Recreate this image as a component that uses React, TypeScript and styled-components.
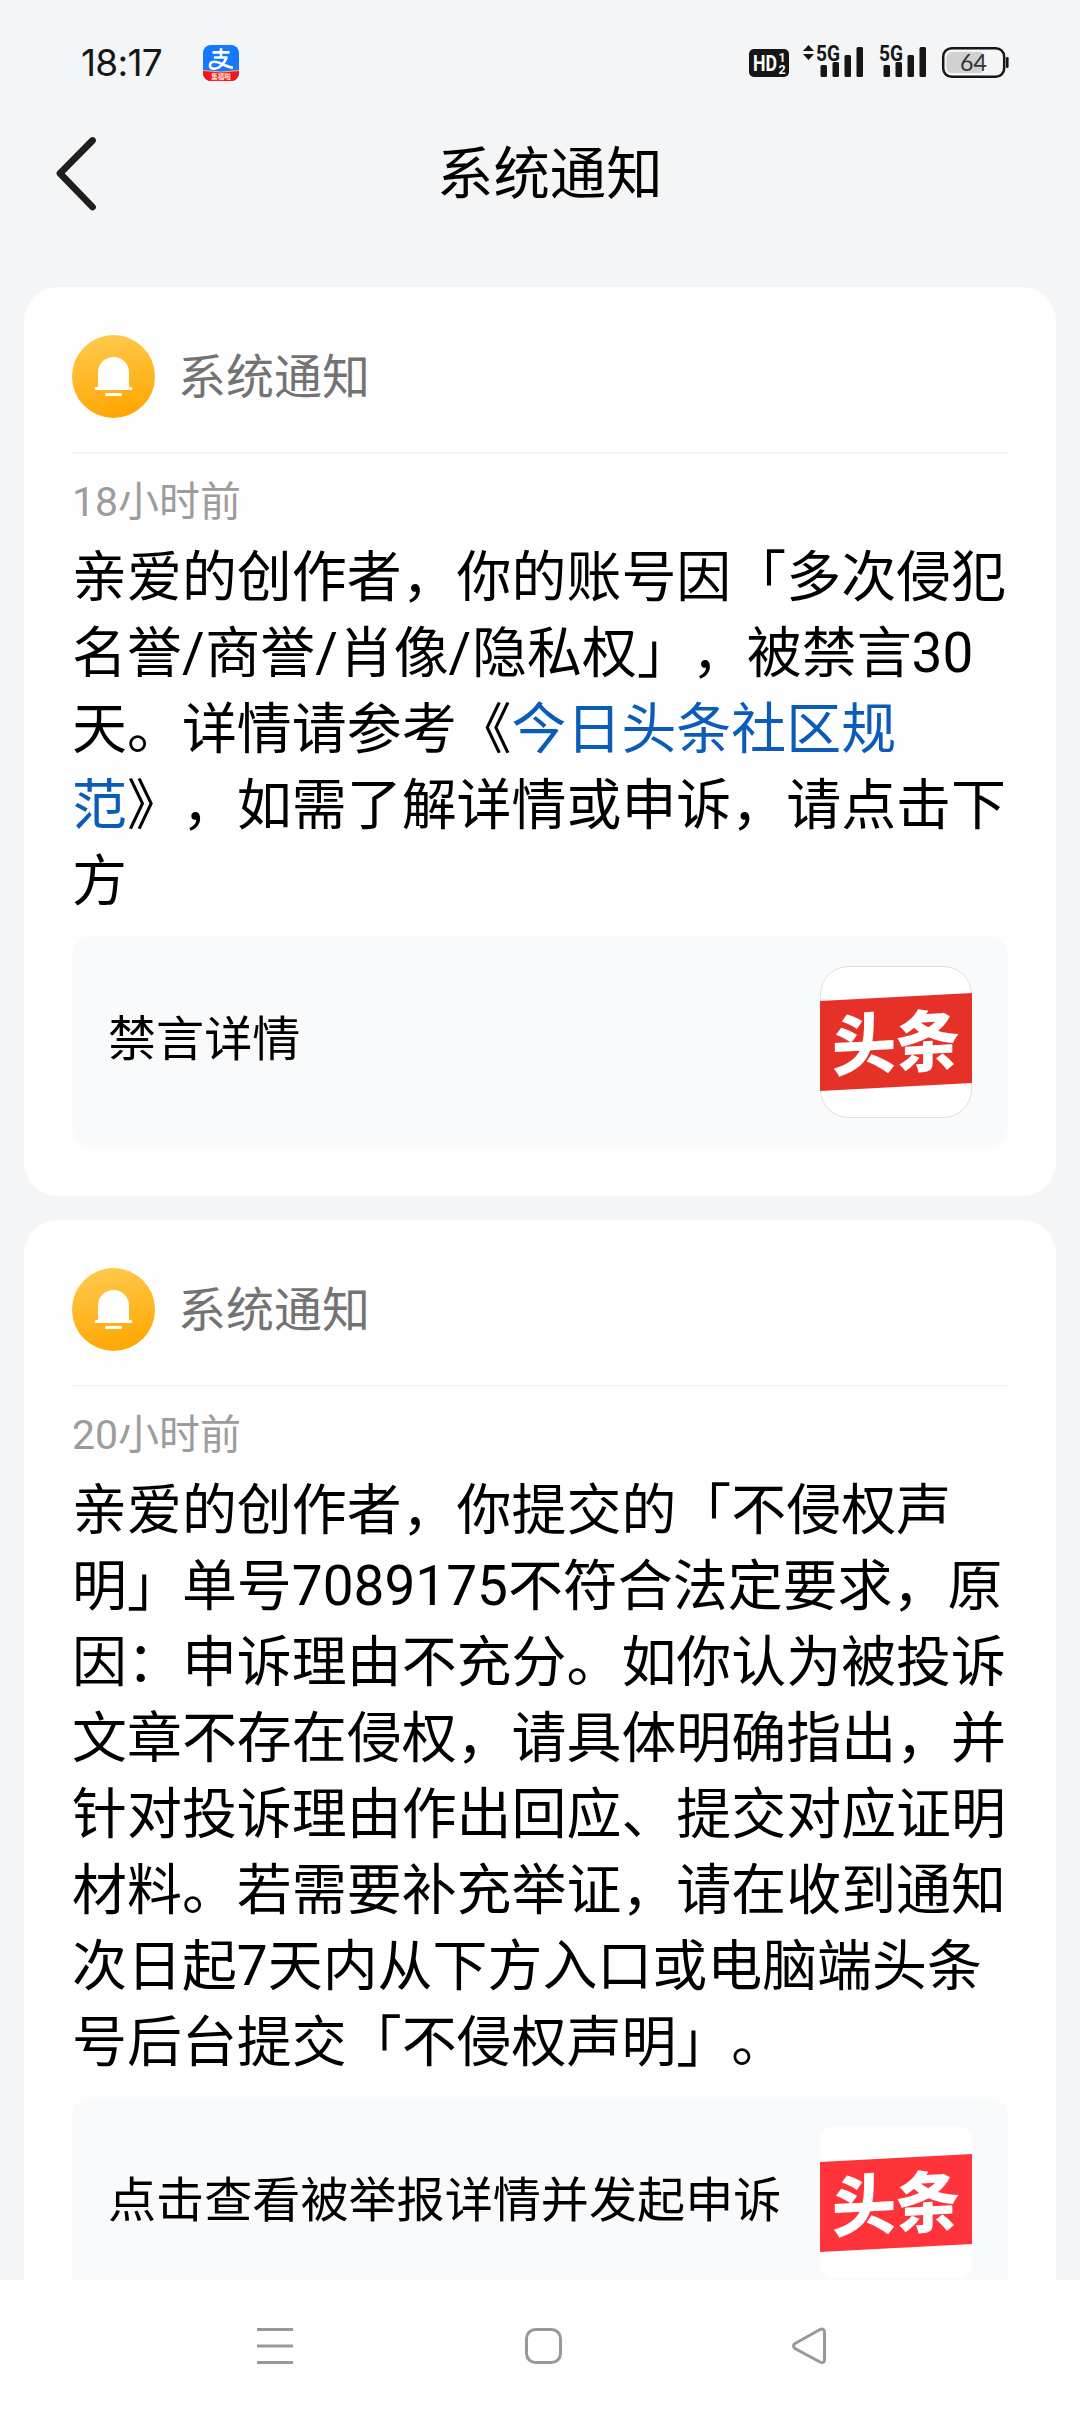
import React from 'react';
import styled, { createGlobalStyle } from 'styled-components';

const GlobalStyle = createGlobalStyle`
  *, *::before, *::after { box-sizing: border-box; }
  html, body { margin: 0; padding: 0; background: #f3f5f7; }
  body {
    font-family: Roboto, 'Noto Sans CJK SC', sans-serif;
    font-weight: 400;
    color: #000;
    text-spacing-trim: space-all;
  }
`;

const Screen = styled.div`
  width: 1080px;
  height: 2412px;
  display: flex;
  flex-direction: column;
  overflow: hidden;
  background: #f3f5f7;
`;

const StatusBar = styled.div`
  flex: none;
  height: 125px;
  display: flex;
  justify-content: space-between;
  padding: 0 71px 0 81px;
`;

const StatusLeft = styled.div`
  display: flex;
  align-items: center;
  height: 125px;
`;

const Clock = styled.span`
  width: 122px;
  font: 400 37px/44px Inter, sans-serif;
  letter-spacing: -0.7px;
  color: #161616;
`;

const StatusIcons = styled.svg`
  display: block;
  width: 262px;
  height: 125px;
`;

const TitleBar = styled.header`
  flex: none;
  height: 162px;
  display: grid;
  grid-template-columns: 437px 1fr;
  padding-top: 8px;
`;

const BackButton = styled.button`
  width: 120px;
  height: 80px;
  padding: 0 0 0 54px;
  border: 0;
  background: none;
  display: flex;
  justify-content: flex-start;
`;

const PageTitle = styled.h1`
  margin: 0;
  padding-top: 2px;
  font-size: 56.4px;
  line-height: 80px;
  font-weight: 400;
`;

const Feed = styled.main`
  flex: 1;
  min-height: 0;
  overflow: hidden;
  display: flex;
  flex-direction: column;
  gap: 24px;
  padding: 0 24px;
`;

const Card = styled.section`
  flex: none;
  background: #fefefe;
  border-radius: 34px;
  padding: 48px 48px 49px;
`;

const CardHeader = styled.div`
  display: flex;
  align-items: center;
  gap: 23px;
  height: 119px;
  padding-bottom: 34px;
  border-bottom: 2px solid #f4f4f4;
`;

const Source = styled.span`
  padding-top: 2px;
  font-size: 48px;
  line-height: 60px;
  color: #737373;
`;

const Time = styled.div`
  margin-top: 18px;
  font-size: 41px;
  line-height: 60px;
  height: 60px;
  color: #9c9c9c;
`;

const Message = styled.p`
  margin: 7px 0 17px;
  font-size: 54.95px;
  line-height: 76px;
`;

const Line = styled.span`
  display: block;
  white-space: nowrap;
`;

const Link = styled.a`
  color: #0b5cb8;
`;

const Spread = styled.span<{ $by: number }>`
  letter-spacing: ${(p) => p.$by}px;
`;

const Attachment = styled.div`
  height: 211px;
  display: flex;
  align-items: center;
  justify-content: space-between;
  padding: 0 36px;
  border-radius: 20px;
  background: #f9fafc;
`;

const AttachmentTitle = styled.span`
  padding-bottom: 3px;
  font-size: 48.1px;
  line-height: 60px;
  white-space: nowrap;
`;

const NavBar = styled.nav`
  flex: none;
  height: 132px;
  display: flex;
  align-items: center;
  background: #fefefe;
  gap: 228px;
  padding: 0 0 0 255px;
`;

const NavIcon = styled.svg`
  flex: none;
  display: block;
  width: 40px;
  height: 40px;
  fill: none;
  stroke: #999;
  stroke-width: 3;
`;

const AlipayIcon = () => (
  <svg width="36" height="36" viewBox="0 0 36 36">
    <defs>
      <clipPath id="alipay">
        <rect width="36" height="36" rx="8" />
      </clipPath>
    </defs>
    <g clipPath="url(#alipay)">
      <rect width="36" height="36" fill="#1677ff" />
      <path d="M0 25.5Q18 28.5 36 25.5V36H0Z" fill="#f5141c" />
      <path d="M0 25.5Q18 28.5 36 25.5" stroke="#ffb27a" fill="none" />
      <g fill="none" stroke="#fff" strokeWidth="2.6">
        <path d="M9.500 7.400H26.500M18 3.200V12.500M11 12.500H24.500" />
        <path d="M23.700 12.500C21 19.500 15 24.200 10.500 23.700C5.500 23 6 17 11 16.700C17 16.300 22 22.200 30 22.600" />
      </g>
      <text x="18" y="34" textAnchor="middle" fontSize="6.500" fontWeight="700" fill="#ffe9d8" fontFamily="Noto Sans CJK SC">集福啦</text>
    </g>
  </svg>
);

const Signal = ({ x }: { x: number }) => (
  <g fill="#161616">
    <text x={x - 4.5} y="60.5" fontSize="22.500" fontWeight="700" fontFamily="Roboto" textLength="24" lengthAdjust="spacingAndGlyphs">5G</text>
    <rect x={x} y="65" width="6.500" height="12" rx="1.500" />
    <rect x={x + 12} y="62" width="6.500" height="15" rx="1.500" />
    <rect x={x + 24} y="55" width="6.500" height="22" rx="1.500" />
    <rect x={x + 36} y="47" width="6.500" height="30" rx="1.500" />
  </g>
);

const BellIcon = ({ id }: { id: string }) => (
  <svg width="83" height="83" viewBox="0 0 83 83">
    <defs>
      <linearGradient id={id} x1="0.4" y1="0" x2="0.6" y2="1">
        <stop offset="0" stopColor="#ffc94c" />
        <stop offset="1" stopColor="#ffa600" />
      </linearGradient>
    </defs>
    <circle cx="41.500" cy="41.500" r="41.500" fill={`url(#${id})`} />
    <path d="M26 52V37.500a15.500 15.500 0 0 1 31 0V52h2a1.500 1.500 0 0 1 0 3H24a1.500 1.500 0 0 1 0-3Z" fill="#fff" />
    <rect x="33" y="58" width="17" height="3" rx="1.500" fill="#fff" />
  </svg>
);

const ToutiaoLogo = ({ color, radius, outline }: { color: string; radius: number; outline: string }) => (
  <svg width="152" height="152" viewBox="0 0 152 152">
    <rect x="0.500" y="0.500" width="151" height="151" rx={radius} fill="#fff" stroke={outline} />
    <path d="M0 35L152 27V117L0 125Z" fill={color} />
    <text
      x="76"
      y="98"
      textAnchor="middle"
      transform="translate(0 3.500) skewY(-3) scale(1 1.040)"
      fontFamily="Noto Sans CJK SC"
      fontWeight="900"
      fontSize="64"
      fill="#fff"
    >
      头条
    </text>
  </svg>
);

type NoticeProps = {
  id: string;
  time: string;
  lines: React.ReactNode[];
  action: string;
  logo: React.ReactNode;
};

const Notice = ({ id, time, lines, action, logo }: NoticeProps) => (
  <Card>
    <CardHeader>
      <BellIcon id={id} />
      <Source>系统通知</Source>
    </CardHeader>
    <Time>{time}</Time>
    <Message>
      {lines.map((line, i) => (
        <Line key={i}>{line}</Line>
      ))}
    </Message>
    <Attachment>
      <AttachmentTitle>{action}</AttachmentTitle>
      {logo}
    </Attachment>
  </Card>
);

const muteLines: React.ReactNode[] = [
  '亲爱的创作者，你的账号因「多次侵犯',
  <>名誉<Spread $by={0.8}>/</Spread>商誉<Spread $by={0.8}>/</Spread>肖像<Spread $by={0.8}>/</Spread>隐私权」，被禁言30</>,
  <>天。详情请参考《<Link>今日头条社区规</Link></>,
  <><Link>范</Link>》，如需了解详情或申诉，请点击下</>,
  '方',
];

const claimLines: React.ReactNode[] = [
  '亲爱的创作者，你提交的「不侵权声',
  '明」单号7089175不符合法定要求，原',
  '因：申诉理由不充分。如你认为被投诉',
  '文章不存在侵权，请具体明确指出，并',
  '针对投诉理由作出回应、提交对应证明',
  '材料。若需要补充举证，请在收到通知',
  '次日起7天内从下方入口或电脑端头条',
  '号后台提交「不侵权声明」。',
];

export default function App() {
  return (
    <Screen>
      <GlobalStyle />
      <StatusBar>
        <StatusLeft>
          <Clock>18:17</Clock>
          <AlipayIcon />
        </StatusLeft>
        <StatusIcons viewBox="747 0 262 125">
          <rect x="749" y="49" width="40" height="28" rx="5" fill="#161616" />
          <text x="753" y="71" fontSize="22" fontWeight="700" fontFamily="Roboto" fill="#fff" textLength="24" lengthAdjust="spacingAndGlyphs">HD</text>
          <text x="778.500" y="62" fontSize="12.500" fontWeight="700" fontFamily="Roboto" fill="#fff">1</text>
          <text x="778.500" y="74" fontSize="12.500" fontWeight="700" fontFamily="Roboto" fill="#fff">2</text>
          <path d="M803 51L808.500 45L814 51ZM803 54H814L808.500 60Z" fill="#161616" />
          <Signal x={820.5} />
          <Signal x={883.5} />
          <rect x="943.200" y="48.200" width="61" height="28.600" rx="8.500" fill="none" stroke="#161616" strokeWidth="2.500" />
          <path d="M952 52H982V73H952a5.500 5.500 0 0 1-5.500-5.500V57.500A5.500 5.500 0 0 1 952 52Z" fill="#d0d1d3" />
          <text x="973.500" y="71" textAnchor="middle" fontSize="24" fontFamily="Lato" fill="#333" textLength="27" lengthAdjust="spacingAndGlyphs">64</text>
          <rect x="1006" y="57" width="2.600" height="11" rx="1.300" fill="#161616" />
        </StatusIcons>
      </StatusBar>
      <TitleBar>
        <BackButton aria-label="返回">
          <svg width="46" height="80" viewBox="54 133 46 80">
            <path d="M92.500 140.500L60 173.300L92.500 207" fill="none" stroke="#1e1e1e" strokeWidth="6.800" strokeLinecap="round" strokeLinejoin="round" />
          </svg>
        </BackButton>
        <PageTitle>系统通知</PageTitle>
      </TitleBar>
      <Feed>
        <Notice
          id="bell-mute"
          time="18小时前"
          lines={muteLines}
          action="禁言详情"
          logo={<ToutiaoLogo color="#e63129" radius={28} outline="#dfe0e2" />}
        />
        <Notice
          id="bell-claim"
          time="20小时前"
          lines={claimLines}
          action="点击查看被举报详情并发起申诉"
          logo={<ToutiaoLogo color="#ff343a" radius={12} outline="#fff" />}
        />
      </Feed>
      <NavBar>
        <NavIcon viewBox="0 0 40 40">
          <path d="M2 3.500H38M2 20H38M2 36.500H38" />
        </NavIcon>
        <NavIcon viewBox="0 0 40 40">
          <rect x="3.500" y="3.500" width="34" height="33" rx="9" />
        </NavIcon>
        <NavIcon viewBox="0 0 40 40">
          <path d="M4 17.500L29 3.500Q33 2 33.500 5.500V34Q33 38 29 36L4 22.500Q1 20 4 17.500Z" />
        </NavIcon>
      </NavBar>
    </Screen>
  );
}
